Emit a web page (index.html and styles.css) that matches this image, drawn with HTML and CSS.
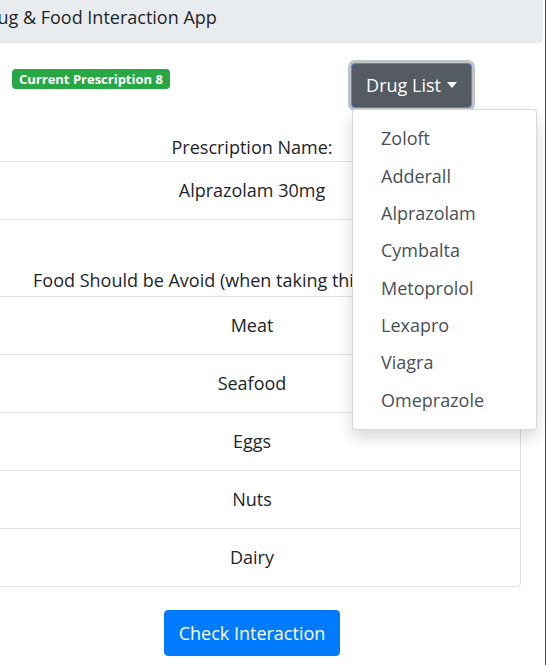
FILE: index.html
```html
<!DOCTYPE html>
<html lang="en">
<head>
<meta charset="utf-8">
<title>Drug &amp; Food Interaction App</title>
<link rel="stylesheet" href="styles.css">
</head>
<body>
<div class="viewport">
  <div class="page">
    <header class="navbar">
      <span class="brand">Drug &amp; Food Interaction App</span>
    </header>
    <main class="container">
      <div class="top-row">
        <span class="badge">Current Prescription 8</span>
        <div class="dropdown">
          <button class="btn-drug" type="button"><span class="btn-label">Drug List</span><span class="caret"></span></button>
          <ul class="dropdown-menu">
            <li class="dropdown-item">Zoloft</li>
            <li class="dropdown-item">Adderall</li>
            <li class="dropdown-item">Alprazolam</li>
            <li class="dropdown-item">Cymbalta</li>
            <li class="dropdown-item">Metoprolol</li>
            <li class="dropdown-item">Lexapro</li>
            <li class="dropdown-item">Viagra</li>
            <li class="dropdown-item">Omeprazole</li>
          </ul>
        </div>
      </div>
      <div class="rx-title">Prescription Name:</div>
      <div class="rx-row">Alprazolam 30mg</div>
      <div class="food-title">Food Should be Avoid (when taking this medication):</div>
      <ul class="food-list">
        <li class="food-item">Meat</li>
        <li class="food-item">Seafood</li>
        <li class="food-item">Eggs</li>
        <li class="food-item">Nuts</li>
        <li class="food-item">Dairy</li>
      </ul>
      <div class="actions">
        <button class="btn-check" type="button">Check Interaction</button>
      </div>
    </main>
  </div>
</div>
</body>
</html>
```

FILE: styles.css
```css
html, body {
  margin: 0;
  padding: 0;
  background: #ffffff;
}
body {
  font-family: "Segoe UI", "Open Sans", "Noto Sans", sans-serif;
  color: #212529;
  font-size: 18px;
  line-height: 27px;
}
.viewport {
  width: 545px;
  height: 665px;
  border-right: 1px solid #4a4a4a;
  overflow: hidden;
}
.page {
  margin-left: -40px;
  width: 583px;
}
.navbar {
  box-sizing: border-box;
  height: 43px;
  background: #e9ecef;
  border-bottom-right-radius: 4px;
  padding: 2px 16px 0 17px;
  display: flex;
  align-items: flex-start;
}
.brand {
  font-size: 18px;
  line-height: 30px;
  color: #212529;
  white-space: nowrap;
}
.container {
  margin: 0 22px 0 23px;
}
.top-row {
  display: flex;
  justify-content: space-between;
  align-items: flex-start;
  margin-top: 20px;
  height: 45px;
}
.badge {
  margin-left: 29px;
  margin-top: 6px;
  background: #28a745;
  color: #ffffff;
  font-weight: 700;
  font-size: 13px;
  line-height: 20px;
  height: 20px;
  padding: 0 7px;
  border-radius: 4px;
  white-space: nowrap;
}
.dropdown {
  position: relative;
  margin-right: 49px;
}
.btn-drug {
  box-sizing: border-box;
  height: 45px;
  width: 121px;
  background: #545b62;
  color: #ffffff;
  font-family: inherit;
  font-size: 18px;
  line-height: 27px;
  border: 1px solid #4f8be6;
  border-radius: 4px;
  box-shadow: 0 0 0 3px rgba(130, 138, 145, 0.5);
  padding: 0;
  display: flex;
  align-items: center;
  justify-content: center;
  gap: 6px;
  white-space: nowrap;
}
.btn-label {
  white-space: nowrap;
}
.caret {
  flex: none;
  width: 0;
  height: 0;
  border-left: 5px solid transparent;
  border-right: 5px solid transparent;
  border-top: 6px solid #ffffff;
  margin-top: -2px;
}
.dropdown-menu {
  position: absolute;
  left: 1px;
  top: 46px;
  width: 185px;
  box-sizing: border-box;
  margin: 0;
  padding: 10px 0;
  list-style: none;
  background: #ffffff;
  border: 1px solid rgba(0, 0, 0, 0.15);
  border-radius: 4px;
  box-shadow: 0 8px 16px rgba(0, 0, 0, 0.15);
  z-index: 10;
}
.dropdown-item {
  padding: 5.2px 28px;
  color: #495057;
  font-size: 18px;
  line-height: 27px;
  white-space: nowrap;
}
.rx-title {
  margin-top: 26px;
  text-align: center;
  border-bottom: 1px solid #dee2e6;
}
.rx-row {
  text-align: center;
  padding: 15px 0;
  border-bottom: 1px solid #dee2e6;
}
.food-title {
  margin-top: 47px;
  padding-bottom: 2px;
  text-align: center;
  white-space: nowrap;
}
.food-list {
  list-style: none;
  margin: 0;
  padding: 0;
  border: 1px solid #dee2e6;
  border-radius: 4px;
}
.food-item {
  text-align: center;
  padding: 15px 0;
  border-top: 1px solid #dee2e6;
}
.food-item:first-child {
  border-top: none;
}
.actions {
  display: flex;
  justify-content: center;
  margin-top: 23px;
}
.btn-check {
  box-sizing: border-box;
  height: 46px;
  background: #007bff;
  color: #ffffff;
  font-family: inherit;
  font-size: 18px;
  line-height: 27px;
  border: 1px solid #007bff;
  border-radius: 4px;
  padding: 0 14px;
}
```
